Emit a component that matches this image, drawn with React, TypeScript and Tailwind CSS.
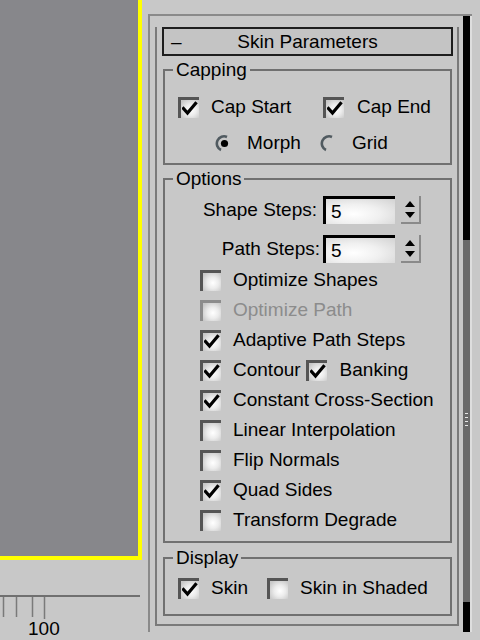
import React from "react";

function Check({ checked = false, disabled = false }: { checked?: boolean; disabled?: boolean }) {
  return (
    <span
      className={
        "flex w-[21px] h-[21px] shrink-0 items-center justify-start border-t-[3px] border-l-[3px] bg-[radial-gradient(circle_at_55%_55%,#ffffff_0%,#ececec_40%,#c8c8c8_85%)] " +
        (disabled ? "border-[#8c8c8c]" : "border-[#555555]")
      }
    >
      {checked && (
        <svg width="16" height="16" viewBox="0 0 16 16" className="ml-[1px]">
          <path d="M1.5 7.5 L5.5 12 L13.5 2.5" fill="none" stroke="#000" strokeWidth="3.2" strokeLinecap="square" />
        </svg>
      )}
    </span>
  );
}

function Radio({ on = false }: { on?: boolean }) {
  return (
    <svg width="16" height="18" viewBox="0 0 16 18" className="shrink-0">
      <path d="M6 16 A7 7 0 0 1 12 3" fill="none" stroke="#505a60" strokeWidth="2.6" />
      {on && <circle cx="9.5" cy="9.5" r="3.6" fill="#000" />}
    </svg>
  );
}

function CheckRow({ label, checked, disabled }: { label: string; checked?: boolean; disabled?: boolean }) {
  return (
    <div className="flex h-[30px] items-center pl-[35px]">
      <Check checked={checked} disabled={disabled} />
      <span className={"ml-[12px] " + (disabled ? "text-[#8c8c8c]" : "text-black")}>{label}</span>
    </div>
  );
}

function Spinner({ label, labelW, gap }: { label: string; labelW: string; gap: string }) {
  return (
    <div className="flex h-[28px] items-center">
      <span className={labelW + " text-right"}>{label}</span>
      <div className={gap + " flex h-[28px] w-[72px] items-center border-t-[3px] border-l-[3px] border-black bg-[radial-gradient(ellipse_at_40%_60%,#ffffff_0%,#f0f0f0_45%,#d2d2d2_100%)] pl-[5px]"}>
        5
      </div>
      <div className="ml-[6px] flex h-[28px] w-[20px] flex-col items-center justify-center gap-[5px] border-r-2 border-b-2 border-[#8a8a8a]">
        <svg width="10" height="6" viewBox="0 0 10 6">
          <path d="M0 6 L5 0 L10 6 Z" fill="#000" />
        </svg>
        <svg width="10" height="6" viewBox="0 0 10 6">
          <path d="M0 0 L10 0 L5 6 Z" fill="#000" />
        </svg>
      </div>
    </div>
  );
}

function Group({ title, className, children }: { title: string; className?: string; children: React.ReactNode }) {
  return (
    <fieldset className={"ml-[6px] mr-[5px] border-2 border-[#707070] " + (className ?? "")}>
      <legend className="ml-[8px] px-[3px] leading-[22px]">{title}</legend>
      {children}
    </fieldset>
  );
}

export default function App() {
  return (
    <div className="flex h-[640px] w-[480px] overflow-hidden bg-[#c8c8c8] font-['Liberation_Sans',Arial,sans-serif] text-[19px] leading-[22px] text-black">
      {/* viewport + time ruler */}
      <div className="flex w-[142px] shrink-0 flex-col">
        <div className="h-[562px] border-r-4 border-b-4 border-[#ffff00] bg-[#87878b]" />
        <div className="mt-[35px] h-[2px] w-[140px] bg-[#707070]" />
        <svg width="142" height="22" className="shrink-0">
          <line x1="3.5" y1="0" x2="3.5" y2="20" stroke="#7a7a7a" strokeWidth="1.5" />
          <line x1="16.5" y1="0" x2="16.5" y2="20" stroke="#7a7a7a" strokeWidth="1.5" />
          <line x1="32.5" y1="0" x2="32.5" y2="20" stroke="#7a7a7a" strokeWidth="1.5" />
          <line x1="44.5" y1="0" x2="44.5" y2="22" stroke="#7a7a7a" strokeWidth="1.5" />
        </svg>
        <span className="ml-[28px] -mt-[1px]">100</span>
      </div>

      {/* command panel */}
      <div className="ml-[6px] mt-[14px] flex h-[618px] w-[324px] shrink-0 border-t-2 border-l-2 border-[#8a8a8a]">
        <div className="flex-1 pl-[5px] pr-[4px]">
          <div className="mt-[26px] border-r-2 border-b-2 border-l-2 border-[#7a7a7a] pb-[8px]">
            <div className="-mt-[15px] mr-[4px] ml-[5px] flex h-[29px] items-center border-2 border-[#1e1e1e] bg-[#c4c4c4]">
              <span className="ml-[7px] w-[22px]">–</span>
              <span className="flex-1 text-center">Skin Parameters</span>
              <span className="w-[29px]" />
            </div>

            <Group title="Capping" className="mt-[3px] pb-[8px]">
              <div className="mt-[14px] flex h-[24px] items-center pl-[13px]">
                <div className="flex w-[145px] items-center">
                  <Check checked />
                  <span className="ml-[12px]">Cap Start</span>
                </div>
                <Check checked />
                <span className="ml-[13px]">Cap End</span>
              </div>
              <div className="mt-[12px] flex h-[24px] items-center pl-[50px]">
                <div className="flex w-[105px] items-center">
                  <Radio on />
                  <span className="ml-[16px]">Morph</span>
                </div>
                <Radio />
                <span className="ml-[16px]">Grid</span>
              </div>
            </Group>

            <Group title="Options" className="mt-[3px] pb-[6px]">
              <div className="mt-[6px]">
                <Spinner label="Shape Steps:" labelW="w-[152px]" gap="ml-[6px]" />
              </div>
              <div className="mt-[11px]">
                <Spinner label="Path Steps:" labelW="w-[155px]" gap="ml-[3px]" />
              </div>
              <div className="mt-[2px]">
                <CheckRow label="Optimize Shapes" />
                <CheckRow label="Optimize Path" disabled />
                <CheckRow label="Adaptive Path Steps" checked />
                <div className="flex h-[30px] items-center pl-[35px]">
                  <Check checked />
                  <span className="ml-[12px]">Contour</span>
                  <span className="ml-[5px]">
                    <Check checked />
                  </span>
                  <span className="ml-[13px]">Banking</span>
                </div>
                <CheckRow label="Constant Cross-Section" checked />
                <CheckRow label="Linear Interpolation" />
                <CheckRow label="Flip Normals" />
                <CheckRow label="Quad Sides" checked />
                <CheckRow label="Transform Degrade" />
              </div>
            </Group>

            <Group title="Display" className="mt-[4px] pb-[14px]">
              <div className="mt-[7px] flex h-[24px] items-center pl-[13px]">
                <div className="flex w-[89px] items-center">
                  <Check checked />
                  <span className="ml-[12px]">Skin</span>
                </div>
                <Check />
                <span className="ml-[12px]">Skin in Shaded</span>
              </div>
            </Group>
          </div>
        </div>

        {/* scrollbar */}
        <div className="flex w-[7px] shrink-0 flex-col">
          <div className="h-[224px] bg-black" />
          <div className="flex flex-1 flex-col items-center bg-[#6a6a6a] pt-[173px]">
            <div className="flex flex-col gap-[3px]">
              <div className="h-[1px] w-[3px] bg-[#e8e8e8]" />
              <div className="h-[1px] w-[3px] bg-[#e8e8e8]" />
              <div className="h-[1px] w-[3px] bg-[#e8e8e8]" />
              <div className="h-[1px] w-[3px] bg-[#e8e8e8]" />
            </div>
          </div>
          <div className="h-[30px] bg-black" />
        </div>
        <div className="w-[2px] shrink-0 bg-[#dedede]" />
      </div>
    </div>
  );
}
